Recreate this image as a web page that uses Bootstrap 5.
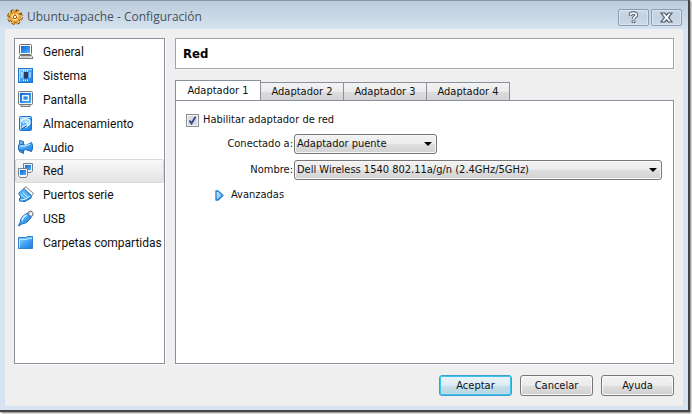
<!DOCTYPE html>
<html lang="es">
<head>
<meta charset="utf-8">
<meta name="viewport" content="width=device-width, initial-scale=1">
<title>Ubuntu-apache - Configuración</title>
<link href="https://cdn.jsdelivr.net/npm/bootstrap@5.3.0/dist/css/bootstrap.min.css" rel="stylesheet">
<style>
  body { font: 11px/16px "DejaVu Sans Condensed", "DejaVu Sans", sans-serif; color: #111; background: #fff; padding: 0 4px 4px 0; }
  .win { background: #d6e4f1; border-top: 1px solid #8d969f; box-shadow: 1px 1px 0 1px #454545, 2px 2px 2px 1px #777; padding: 0 5px 4px; }
  .titlebar { height: 28px; margin: 0 -5px; padding: 4px 6px 0 7px; background: linear-gradient(#bccbdb, #d5e2ef); }
  .titlebar h1 { font: 12px/18px "Open Sans", sans-serif; color: #45505c; }
  .capbtn { width: 31px; height: 17px; border: 1px solid #8c9cb5; border-radius: 2px; background: linear-gradient(#cbd8e6, #c3d1e1 50%, #cddae8); box-shadow: inset 0 0 0 1px #d9e4ef; }
  .capbtn + .capbtn { margin-left: 2px; }
  .client { background: #efefef; padding: 9px 9px 10px 9px; }
  .sidebar { width: 151px; background: #fff; border: 1px solid #8b909c; padding-top: 1px; margin-right: 10px; box-shadow: 1px 1px 0 #fafafa; }
  .sidebar .list-group-item { font: 12px/18px Roboto, sans-serif; color: #111; height: 24px; padding: 0 2px 1px; border: 1px solid transparent; border-radius: 2px; background: none; margin: 0; gap: 8px; white-space: nowrap; }
  .sidebar .list-group-item.active { border-color: #dadada; background: linear-gradient(#f8f8f8, #e5e5e5); }
  .sidebar svg { width: 17px; height: 17px; flex-shrink: 0; }
  .heading { height: 31px; background: #fff; border: 1px solid #a3a3a3; padding: 0 7px; margin-bottom: 11px; box-shadow: 1px 1px 0 #fafafa; }
  .heading h2 { font: bold 13px/20px "DejaVu Sans Condensed", "DejaVu Sans", sans-serif; color: #000; }
  .nav-tabs { border: 0; height: 21px; }
  .nav-tabs .nav-link { width: 83px; height: 19px; padding: 0; margin: 0; border: 1px solid #8b909c; border-left-width: 0; border-radius: 0; color: #111; background: linear-gradient(#f3f3f3, #ebebeb 50%, #dcdcdc 52%, #d3d3d3); }
  .nav-tabs .nav-link:hover { border-color: #8b909c; }
  .nav-tabs .nav-link.active { width: 86px; height: 21px; border-color: #8b909c; border-left-width: 1px; border-bottom-color: #fff; background: #fff; color: #111; }
  .pane { background: #fff; border: 1px solid #8b909c; margin-top: -1px; padding: 11px 11px 10px 10px; box-shadow: 1px 1px 0 #fafafa; }
  .form-check-input.box { width: 13px; height: 13px; margin: 0 4px 0 0; border: 1px solid #8e8f8f; border-radius: 0; box-shadow: inset 0 0 0 1px #f4f4f4; background-color: #d9dce2; }
  .form-check-input.box:checked { background-color: #d9dce2; border-color: #8e8f8f; background-size: 11px 11px; background-image: url("data:image/svg+xml,%3Csvg xmlns='http://www.w3.org/2000/svg' viewBox='0 0 11 11'%3E%3Cpath d='M2.5 5.5L4.5 8.5L8.5 1.8' fill='none' stroke='%2335488c' stroke-width='1.9'/%3E%3C/svg%3E"); }
  .field-row { margin-top: 6px; }
  .field-label { width: 108px; text-align: right; padding-right: 1px; }
  .form-select.combo { width: 143px; height: 20px; padding: 0 20px 0 2px; font: inherit; color: #111; border: 1px solid #777; border-radius: 3px; box-shadow: inset 0 0 0 1px #f8f8f8; background: url("data:image/svg+xml,%3Csvg xmlns='http://www.w3.org/2000/svg' viewBox='0 0 8 4'%3E%3Cpath d='M0 0H8L4 4Z' fill='%23000'/%3E%3C/svg%3E") no-repeat right 4px center / 8px 4px, linear-gradient(#f2f2f2, #ebebeb 50%, #dedede 52%, #d2d2d2); }
  .form-select.combo.wide { width: auto; }
  .dlg { width: 73px; height: 21px; padding: 0; font: inherit; color: #111; border: 1px solid #777; border-radius: 3px; background: linear-gradient(#f2f2f2, #ebebeb 50%, #dedede 52%, #d0d0d0); box-shadow: inset 0 0 0 1px #f8f8f8; }
  .dlg.accept { border-color: #3f9fca; background: linear-gradient(#eaf4f9, #dcecf4 50%, #c6deea 52%, #b9d6e4); box-shadow: inset 0 0 0 1px #39c4f2; }
  .actions { padding-top: 11px; gap: 8px; }
  .adv { padding: 7px 0 0 29px; }
  .adv button { gap: 7px; font: inherit; color: #111; }
</style>
</head>
<body class="vh-100 m-0">
<svg class="position-absolute" width="0" height="0" aria-hidden="true">
  <defs>
    <linearGradient id="blue" x1="0" y1="0" x2="1" y2="1"><stop offset="0" stop-color="#8fd4ff"/><stop offset=".5" stop-color="#3fa2f2"/><stop offset="1" stop-color="#1f7bdb"/></linearGradient>
    <linearGradient id="pale" x1="0" y1="0" x2="1" y2="1"><stop offset="0" stop-color="#e6f6ff"/><stop offset="1" stop-color="#4aa5ee"/></linearGradient>
    <linearGradient id="screen" x1="0" y1="0" x2="1" y2="1"><stop offset="0" stop-color="#0d63d6"/><stop offset="1" stop-color="#4fb2fb"/></linearGradient>
  </defs>
</svg>
<div class="win h-100 d-flex flex-column">
  <header class="titlebar d-flex align-items-center">
    <svg width="16" height="16" viewBox="0 0 16 16" class="me-1">
      <circle cx="8" cy="8" r="6.5" fill="none" stroke="#7b4508" stroke-width="2.6" stroke-dasharray="3.1 2"/>
      <circle cx="8" cy="8" r="5.9" fill="#f2a92c" stroke="#8b500c"/>
      <circle cx="8" cy="8" r="6.2" fill="none" stroke="#ffc552" stroke-width="1.6" stroke-dasharray="2.5 2.6"/>
      <circle cx="8" cy="8" r="4.2" fill="#ffe7a5" stroke="#e09020"/>
      <path d="M8 8V4.3M8 8L4.8 9.8M8 8L11.2 9.8" stroke="#d98a1b" stroke-width="1.2"/>
      <circle cx="8" cy="8" r="1.7" fill="#fff4d1" stroke="#a8620d"/>
    </svg>
    <h1 class="m-0 flex-grow-1">Ubuntu-apache - Configuración</h1>
    <button type="button" class="capbtn p-0 d-flex align-items-center justify-content-center" aria-label="Ayuda de la ventana">
      <svg width="11" height="13" viewBox="0 0 11 13" fill="none"><path d="M2.5 4.7V3.6C2.8 1.4 8.4 1.3 8.4 4C8.4 5.8 5.7 5.8 5.5 8M5.5 9.2V12" stroke="#525b6b" stroke-width="3.6"/><path d="M2.5 4.2V3.6C2.8 1.6 8.4 1.5 8.4 4C8.4 5.8 5.7 5.8 5.5 7.8M5.5 9.8V11.3" stroke="#f6f8fa" stroke-width="1.8"/></svg>
    </button>
    <button type="button" class="capbtn p-0 d-flex align-items-center justify-content-center" aria-label="Cerrar">
      <svg width="13" height="11" viewBox="0 0 13 11"><path d="M1 1H4.7L6.5 3L8.3 1H12L8.6 5.5L12 10H8.3L6.5 8L4.7 10H1L4.4 5.5Z" fill="#f6f8fa" stroke="#525b6b" stroke-width="1.2"/></svg>
    </button>
  </header>
  <main class="client flex-grow-1 d-flex flex-column">
    <div class="d-flex flex-grow-1">
      <nav class="sidebar list-group rounded-0 flex-shrink-0" aria-label="Categorías">
        <a href="#" class="list-group-item d-flex align-items-center"><svg viewBox="0 0 17 17"><rect x="1.500" y="1.500" width="12" height="10" rx="1" fill="#fff" stroke="#6b6b6b"/><rect x="3" y="3" width="9" height="7" fill="url(#screen)"/><path d="M.500 15.500L2 12.500H13.500L15 15.500Z" fill="#eee" stroke="#777"/><path d="M3 14H12" stroke="#aaa"/></svg>General</a>
        <a href="#" class="list-group-item d-flex align-items-center"><svg viewBox="0 0 17 17"><rect x=".500" y="1.500" width="14" height="14" fill="url(#blue)" stroke="#1f72c9"/><path d="M1.500 14.500V2.500H14" fill="none" stroke="#a5dcff"/><path d="M3 6H5M3 8H5M3 10H5M11 6H13M11 8H13M11 10H13M5.500 3V4.500M7.500 3V4.500M9.500 3V4.500M5.500 12.500V14M7.500 12.500V14M9.500 12.500V14" stroke="#e0f4ff"/><rect x="6" y="5" width="4" height="6.500" fill="#263c58"/></svg>Sistema</a>
        <a href="#" class="list-group-item d-flex align-items-center"><svg viewBox="0 0 17 17"><rect x=".500" y=".500" width="14" height="13" rx="1" fill="#f3f3f3" stroke="#777"/><rect x="2" y="2" width="11" height="10" fill="url(#screen)"/><rect x="4.700" y="4.700" width="5.600" height="4.600" fill="#2b86e8" stroke="#e9f7ff" stroke-width="1.400"/><path d="M3 13.500H12V15.500H3Z" fill="#ddd" stroke="#777"/></svg>Pantalla</a>
        <a href="#" class="list-group-item d-flex align-items-center"><svg viewBox="0 0 17 17"><rect x="1.500" y="1.500" width="12" height="14" rx="1" fill="url(#blue)" stroke="#1f72c9"/><path d="M2.500 14.500V2.500H12.500" fill="none" stroke="#b3e1ff"/><path d="M3.500 6.500C4 2.500 12 2.500 12 7.500C12 10.500 9 11 7.500 12.500M4 12.500L8.500 9.500C10 8 8.500 6 7 7.500" fill="#9bd4fb" stroke="#f0faff" stroke-width="1.300"/><path d="M4 13.800L9 10.500" stroke="#1758a8"/></svg>Almacenamiento</a>
        <a href="#" class="list-group-item d-flex align-items-center"><svg viewBox="0 0 17 17"><path d="M1.500 1.500L5.500 2.500V14.500L1.500 12.500Z" fill="url(#blue)" stroke="#1f72c9"/><path d="M.500 6L6 5.500L7.500 6.500L13.500 3.500C15 6 15 10 13.500 12.500L7.500 10.500L6 11.500L.500 11Z" fill="url(#blue)" stroke="#1c6bc0"/><path d="M2 7.200L7 7L12.500 5" fill="none" stroke="#bfe6ff" stroke-width="1.300"/></svg>Audio</a>
        <a href="#" class="list-group-item active d-flex align-items-center" aria-current="page"><svg viewBox="0 0 17 17"><path d="M5.500 1.500H14.500V9L13 10.500H7L5.500 9Z" fill="#eef2f6" stroke="#71808f"/><rect x="7" y="3" width="6" height="5" fill="url(#screen)"/><path d="M.500 6.500H9.500V13.500L8 15.500H2L.500 13.500Z" fill="#f4f6f8" stroke="#71808f"/><rect x="2" y="8" width="6" height="5" fill="url(#screen)"/></svg>Red</a>
        <a href="#" class="list-group-item d-flex align-items-center"><svg viewBox="0 0 17 17"><path d="M5.500 2.500L8 .800L15.500 7.500L14 9.500" fill="#fff" stroke="#777"/><path d="M.500 7.500L6 2.500L13.500 9.500L13 12L7 15.500L1.500 15V12.500L3 11Z" fill="url(#blue)" stroke="#1c6bc0"/><path d="M2 7.500L6 4L12 9.500L8 12.500Z" fill="#55b0f5"/><path d="M3 8.500L7.500 12.800M4.700 6.500L9.800 11.300M2.500 14L7 13.300L12.500 10" stroke="#dff3ff" fill="none"/></svg>Puertos serie</a>
        <a href="#" class="list-group-item d-flex align-items-center"><svg viewBox="0 0 17 17"><path d="M9 4L11.500 1.500C13 .500 15.800 3 14.800 5L12.500 7.500" fill="#fff" stroke="#7a7a7a" stroke-width="1.200"/><path d="M10.500 4L12.500 2.200" stroke="#aaa"/><path d="M4 7L8.500 3.500C11 4 12.500 5.500 12.800 8L9 12C7 13.500 5 13.500 3.500 14.200L.800 16L.500 15.200L2 13C2.500 11 2.500 9 4 7Z" fill="url(#blue)" stroke="#1c6bc0"/><path d="M4 10.500C4.500 8 6.500 6 8.700 5.300" fill="none" stroke="#e2f4ff" stroke-width="1.500"/></svg>USB</a>
        <a href="#" class="list-group-item d-flex align-items-center"><svg viewBox="0 0 17 17"><path d="M.500 14.500V3.500H8L9.500 2.500H14.500V14.500Z" fill="#6ebdf6" stroke="#2f83d0"/><path d="M1 5.500H9L10.500 4.500H14V14H1Z" fill="url(#blue)"/><path d="M1.500 13.500V5.500H9L10.500 4.500H14" fill="none" stroke="#b9e4ff"/></svg>Carpetas compartidas</a>
      </nav>
      <section class="flex-grow-1 d-flex flex-column">
        <div class="heading d-flex align-items-center"><h2 class="m-0">Red</h2></div>
        <div class="nav nav-tabs align-items-end flex-nowrap" role="tablist">
          <button type="button" class="nav-link active" role="tab" aria-selected="true" aria-controls="panel1" id="tab1">Adaptador 1</button>
          <button type="button" class="nav-link" role="tab" aria-selected="false">Adaptador 2</button>
          <button type="button" class="nav-link" role="tab" aria-selected="false">Adaptador 3</button>
          <button type="button" class="nav-link" role="tab" aria-selected="false">Adaptador 4</button>
        </div>
        <form class="pane flex-grow-1" id="panel1" role="tabpanel" aria-labelledby="tab1">
          <div class="d-flex align-items-center">
            <input class="form-check-input box" type="checkbox" id="enable" checked>
            <label for="enable">Habilitar adaptador de red</label>
          </div>
          <div class="field-row d-flex align-items-center">
            <label class="field-label" for="attached">Conectado a:</label>
            <select class="form-select combo" id="attached"><option>Adaptador puente</option></select>
          </div>
          <div class="field-row d-flex align-items-center">
            <label class="field-label flex-shrink-0" for="name">Nombre:</label>
            <select class="form-select combo wide flex-grow-1" id="name"><option>Dell Wireless 1540 802.11a/g/n (2.4GHz/5GHz)</option></select>
          </div>
          <div class="adv">
            <button type="button" class="btn p-0 border-0 d-flex align-items-center" aria-expanded="false">
              <svg width="9" height="11" viewBox="0 0 9 11"><path d="M1 1L3 1L8 5.500L3 10H1Z" fill="url(#pale)" stroke="#1a78d2" stroke-width="1.300" stroke-linejoin="round"/></svg>
              Avanzadas
            </button>
          </div>
        </form>
      </section>
    </div>
    <footer class="actions d-flex justify-content-end">
      <button type="button" class="dlg accept">Aceptar</button>
      <button type="button" class="dlg">Cancelar</button>
      <button type="button" class="dlg">Ayuda</button>
    </footer>
  </main>
</div>
<script src="https://cdn.jsdelivr.net/npm/bootstrap@5.3.0/dist/js/bootstrap.bundle.min.js"></script>
</body>
</html>
